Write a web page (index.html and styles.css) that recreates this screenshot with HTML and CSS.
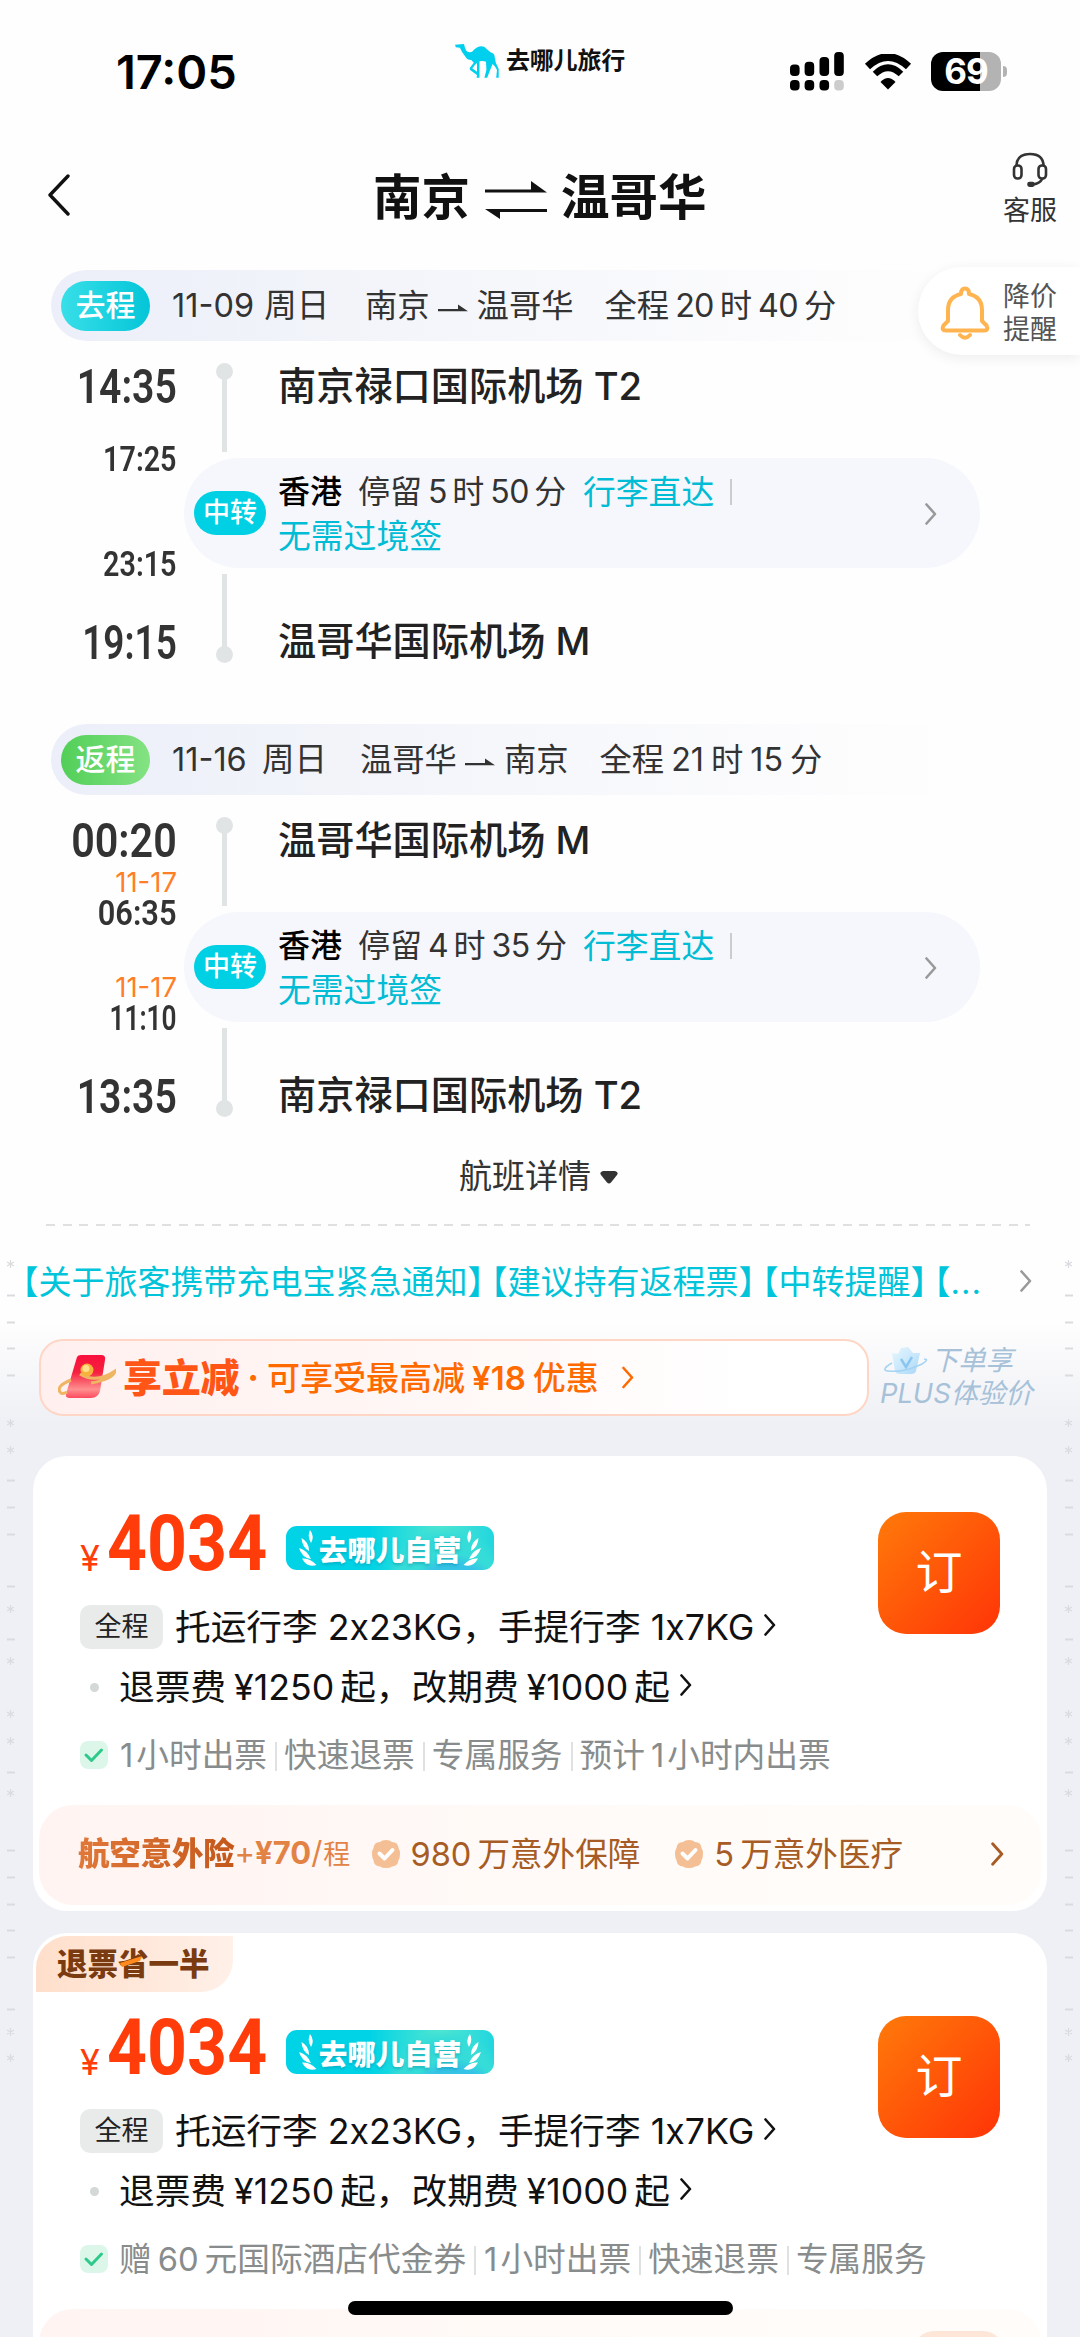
FILE: index.html
```html
<!DOCTYPE html>
<html lang="zh-CN">
<head>
<meta charset="utf-8">
<title>南京 - 温哥华</title>
<link rel="stylesheet" href="styles.css">
</head>
<body>
<svg class="defs" width="0" height="0">
  <defs>
    <linearGradient id="redg" x1="0" y1="0" x2="0" y2="1"><stop offset="0" stop-color="#f9103c"/><stop offset=".4" stop-color="#f5203f"/><stop offset=".8" stop-color="#ff8f8f"/><stop offset="1" stop-color="#ff4a5e"/></linearGradient>
    <linearGradient id="crown" x1="0" y1="0" x2="1" y2="1"><stop offset="0" stop-color="#e6f6fe"/><stop offset=".6" stop-color="#c5e6fb"/><stop offset="1" stop-color="#a5d5f5"/></linearGradient>
  </defs>
  <symbol id="chev" viewBox="0 0 12 22"><path d="M1.5 1.5 L10 11 L1.5 20.5" fill="none" stroke="currentColor" stroke-width="2.6" stroke-linecap="round" stroke-linejoin="round"/></symbol>
  <symbol id="arrow" viewBox="0 0 30 12"><path d="M0 9.2H30L20 2.6V7H0Z" fill="currentColor"/></symbol>
  <symbol id="leaf" viewBox="0 0 18 37"><path d="M11 0Q16 6 12 13Q8 7 11 0ZM2.500 8Q10 12 10 21Q3 17 2.500 8ZM0 18Q8 20 12 29Q3 28 0 18ZM3 28.500Q11 27.500 17.500 35Q8 38 3 28.500Z" fill="#fff"/></symbol>
  <symbol id="ast" viewBox="0 0 8 8"><path d="M4 0V8M.5 2L7.500 6M.5 6L7.500 2" stroke="#d9dbdf" stroke-width="1.200"/></symbol>
  <symbol id="tick" viewBox="0 0 28 28"><rect width="28" height="28" rx="8" fill="#dcf7ea"/><path d="M6 14L11.500 19.500L21.500 9" fill="none" stroke="#2fc98a" stroke-width="3" stroke-linecap="round" stroke-linejoin="round"/></symbol>
  <symbol id="seal" viewBox="0 0 28 28"><path d="M14 0Q18 0 20 2Q26 2 26.500 8Q28 10 28 14Q28 18 26.500 20Q26 26 20 26.500Q18 28 14 28Q10 28 8 26.500Q2 26 1.500 20Q0 18 0 14Q0 10 1.500 8Q2 2 8 2Q10 0 14 0Z" fill="#f4bf94"/><path d="M7.500 13.500L12.500 18.500L20.500 10" fill="none" stroke="#fff" stroke-width="4" stroke-linecap="round" stroke-linejoin="round"/></symbol>
</svg>

<svg class="marks" width="1080" height="2337" viewBox="0 0 1080 2337">
  <defs>
    <g id="strip">
      <path d="M7 1295.500h8M7 1322.500h8M7 1348.500h8M7 1375.500h8M7 1480.500h8M7 1507.500h8M7 1534.500h8M7 1586.500h8M7 1639.500h8M7 1772.500h8M7 1850.500h8M7 1877.500h8M7 1904.500h8M7 1930.500h8M7 1957.500h8M7 2009.500h8" stroke="#d9dbdf" stroke-width="2"/>
      <use href="#ast" x="6.500" y="1260" width="8" height="8"/><use href="#ast" x="6.500" y="1419" width="8" height="8"/><use href="#ast" x="6.500" y="1446" width="8" height="8"/><use href="#ast" x="6.500" y="1605" width="8" height="8"/><use href="#ast" x="6.500" y="1657" width="8" height="8"/><use href="#ast" x="6.500" y="1710" width="8" height="8"/><use href="#ast" x="6.500" y="1737" width="8" height="8"/><use href="#ast" x="6.500" y="1789" width="8" height="8"/><use href="#ast" x="6.500" y="2028" width="8" height="8"/><use href="#ast" x="6.500" y="2054" width="8" height="8"/>
    </g>
  </defs>
  <use href="#strip"/><use href="#strip" x="1058"/>
</svg>

<div class="status">
  <div class="clock">17:05</div>
  <div class="brand">
    <svg width="44" height="34" viewBox="0 0 44 34"><path fill="#00cfee" fill-rule="evenodd" d="M0 .7L9 0L9.800 3.300Q11 8 13.900 8Q15.500 8.500 17.100 7.700Q22 2.300 26.500 2.300Q29.500 2.300 31.400 4.700L35.500 8.300Q39.600 9.500 39.600 12.500L40.800 18.700L43.700 25V33.700H41.200L42 26Q40 22 37.600 20L35.100 26L32.200 33.700H29.400L31.400 26L31 17.700Q28 16.500 24.500 17.300V33.700H21.600L22 31L15.100 26L14.700 24L18.800 18.700L16.300 16Q12 16 10.600 13L6.900 7.700L4.900 3.700L.8 3.300ZM20.600 20L17.300 24.300L22 27.700V19.300Z"/></svg>
    <span>去哪儿旅行</span>
  </div>
  <div class="sys">
    <svg width="54" height="40" viewBox="0 0 54 40"><g><rect x="0" y="12.500" width="9.600" height="11.500" rx="4"/><rect x="14.600" y="9.700" width="9.600" height="14.300" rx="4"/><rect x="29.500" y="5" width="9.600" height="19" rx="4"/><rect x="44.200" y="0" width="9.600" height="24" rx="4"/><rect x="0" y="28" width="9.600" height="10.500" rx="4"/><rect x="14.600" y="28" width="9.600" height="10.500" rx="4"/><rect x="29.500" y="28" width="9.600" height="10.500" rx="4"/><rect x="44.200" y="28" width="9.600" height="10.500" rx="4" fill="#ccc"/></g></svg>
    <svg width="48" height="36" viewBox="0 0 48 36"><path d="M3.500 12.500Q24 -6.500 44.500 12.500" fill="none" stroke="#000" stroke-width="7.500"/><path d="M11 20Q24 7.500 37 20" fill="none" stroke="#000" stroke-width="6.500"/><path d="M16.500 28Q24 20 31.500 28L24 35.500Z"/></svg>
    <div class="battery"><span>69</span></div>
  </div>
</div>

<header class="top">
  <svg class="back" width="24" height="42" viewBox="0 0 24 42"><path d="M21 2L3 21L21 40" fill="none" stroke="#111" stroke-width="3.400" stroke-linecap="round" stroke-linejoin="round"/></svg>
  <h1>南京<svg width="62" height="38" viewBox="0 0 62 38"><path d="M0 8.500H46V0L62 11.500H0ZM62 28H0L15 38V31H62Z" fill="#111"/></svg>温哥华</h1>
  <div class="service">
    <svg width="36" height="36" viewBox="0 0 36 36" fill="none" stroke="#333" stroke-width="2.600"><path d="M4.500 13.500Q5 2 18 2Q31 2 31.500 13.500"/><rect x="2" y="13.500" width="7.500" height="13" rx="3.500"/><rect x="26.500" y="13.500" width="7.500" height="13" rx="3.500"/><path d="M30.500 26.500Q28 31.500 21 32.500"/><rect x="16.500" y="31" width="5" height="2.600" rx="1" fill="#333"/></svg>
    <span>客服</span>
  </div>
</header>

<aside class="alert">
  <svg width="50" height="54" viewBox="0 0 50 54" fill="none" stroke="#ffb450" stroke-width="4" stroke-linejoin="round" stroke-linecap="round"><path d="M21 8Q21 2.500 25 2.500Q29 2.500 29 8Q42 11 42 24V35L46.500 39.500Q49 44.500 44 44.500H6Q1 44.500 3.500 39.500L8 35V24Q8 11 21 8Z"/><path d="M20 49Q25 54.500 30 49"/></svg>
  <p>降价<br>提醒</p>
</aside>

<main>
<section class="trip">
  <div class="bar"><b class="go">去程</b><span class="date">11-09 周日</span><span class="cities">南京<svg width="30" height="12"><use href="#arrow"/></svg>温哥华</span><span class="total">全程<i>20</i>时<i>40</i>分</span></div>
  <div class="route">
    <div class="times"><span class="t1 mid">14:35</span><span class="d"></span><span class="t2 mid">17:25</span><span class="d d2"></span><span class="t2 mid">23:15</span><span class="t1 end slim">19:15</span></div>
    <div class="rail down"></div>
    <div class="port">南京禄口国际机场 T2</div>
    <div class="transit"><b>中转</b><div class="info"><p><strong>香港</strong><span>停留<i>5</i>时<i>50</i>分</span><em>行李直达</em><u></u></p><p><em>无需过境签</em></p></div><svg width="12" height="22"><use href="#chev"/></svg></div>
    <div class="rail up"></div>
    <div class="port last">温哥华国际机场 M</div>
  </div>
</section>
<section class="trip second">
  <div class="bar"><b class="ret">返程</b><span class="date">11-16 周日</span><span class="cities">温哥华<svg width="30" height="12"><use href="#arrow"/></svg>南京</span><span class="total">全程<i>21</i>时<i>15</i>分</span></div>
  <div class="route">
    <div class="times"><span class="t1">00:20</span><span class="d">11-17</span><span class="t2">06:35</span><span class="d d2">11-17</span><span class="t2 slim">11:10</span><span class="t1 end mid">13:35</span></div>
    <div class="rail down"></div>
    <div class="port">温哥华国际机场 M</div>
    <div class="transit"><b>中转</b><div class="info"><p><strong>香港</strong><span>停留<i>4</i>时<i>35</i>分</span><em>行李直达</em><u></u></p><p><em>无需过境签</em></p></div><svg width="12" height="22"><use href="#chev"/></svg></div>
    <div class="rail up"></div>
    <div class="port last">南京禄口国际机场 T2</div>
  </div>
</section>

<div class="detail">航班详情<svg width="18" height="13" viewBox="0 0 18 13"><path d="M3 0H15Q19 1 17 4L11 11.500Q9 13.500 7 11.500L1 4Q-1 1 3 0Z" fill="#333"/></svg></div>
<div class="dash"></div>
<div class="notice"><span>【关于旅客携带充电宝紧急通知<i>】</i>【建议持有返程票<i>】</i>【中转提醒<i>】</i>【<s>...</s></span><svg width="12" height="22"><use href="#chev"/></svg></div>

<div class="promos">
  <div class="promo">
    <svg width="58" height="46" viewBox="0 0 58 46"><path d="M19 2Q20 0 23 0H43Q48 0 47 5L42 36Q40 43 33 43H12Q7 43 8 39Z" fill="url(#redg)"/><path d="M13 25Q-2 31 2 37Q4 40 9 37M22 19Q38 29 57 16Q55 24 33 28" fill="none" stroke="#efb563" stroke-width="3"/><circle cx="29" cy="15" r="6.500" fill="#f7b23e"/><circle cx="28" cy="13.500" r="3.500" fill="#ffe08d"/></svg>
    <strong>享立减</strong><span class="pt">·</span><span class="ptext">可享受最高减<i>¥18</i>优惠</span><svg class="pc" width="12" height="23"><use href="#chev"/></svg>
  </div>
  <div class="plus">
    <p><svg width="44" height="28" viewBox="0 0 44 28"><path d="M8 6L14 7L17 1L24 0L29 6L36 6L32 24Q31 27 27 27H15Q12 27 11 24Z" fill="url(#crown)"/><path d="M17 12L22 20L28 10" fill="none" stroke="#8cc6f0" stroke-width="2.500"/><path d="M8 16Q-4 23 4 24Q20 26 38 17Q46 12 40 12" fill="none" stroke="#a5d3f3" stroke-width="1.500"/></svg>下单享</p>
    <p class="l2">PLUS体验价</p>
  </div>
</div>

<article class="card">
  <div class="offer">
    <div class="price"><small>¥</small><strong><span>4034</span></strong><div class="self"><svg width="18" height="37"><use href="#leaf"/></svg><span>去哪儿自营</span><svg class="flip" width="18" height="37"><use href="#leaf"/></svg></div></div>
    <div class="book">订</div>
  </div>
  <div class="bag"><b>全程</b><span>托运行李 2x23KG，手提行李 1x7KG</span><svg width="12" height="22"><use href="#chev"/></svg></div>
  <div class="fee"><span>退票费<i>¥1250</i>起，改期费<i>¥1000</i>起</span><svg width="12" height="22"><use href="#chev"/></svg></div>
  <div class="perks"><svg width="28" height="28"><use href="#tick"/></svg><span><i class="one">1</i>小时出票</span><span>快速退票</span><span>专属服务</span><span>预计<i class="one mid">1</i>小时内出票</span></div>
  <div class="insure"><strong>航空意外险</strong><span class="add">+<b>¥70</b>/<small>程</small></span><svg width="28" height="28"><use href="#seal"/></svg><span class="cov"><i>980</i>万意外保障</span><svg class="s2" width="28" height="28"><use href="#seal"/></svg><span class="cov"><i>5</i>万意外医疗</span><svg class="go2" width="13" height="24"><use href="#chev"/></svg></div>
</article>

<article class="card second">
  <div class="half">退票省一半<svg width="24" height="12" viewBox="0 0 24 12"><path d="M0 8L22 1L20 6L2 12Z" fill="#ff8a1e"/></svg></div>
  <div class="offer">
    <div class="price"><small>¥</small><strong><span>4034</span></strong><div class="self"><svg width="18" height="37"><use href="#leaf"/></svg><span>去哪儿自营</span><svg class="flip" width="18" height="37"><use href="#leaf"/></svg></div></div>
    <div class="book">订</div>
  </div>
  <div class="bag"><b>全程</b><span>托运行李 2x23KG，手提行李 1x7KG</span><svg width="12" height="22"><use href="#chev"/></svg></div>
  <div class="fee"><span>退票费<i>¥1250</i>起，改期费<i>¥1000</i>起</span><svg width="12" height="22"><use href="#chev"/></svg></div>
  <div class="perks"><svg width="28" height="28"><use href="#tick"/></svg><span>赠<i class="sixty">60</i>元国际酒店代金券</span><span><i class="one">1</i>小时出票</span><span>快速退票</span><span>专属服务</span></div>
  <div class="insure"><div class="peek"></div></div>
</article>
</main>
<div class="home"></div>
</body>
</html>
```
FILE: styles.css
```css
* { box-sizing: border-box; margin: 0; padding: 0; }
html { background: #fdfdfd; }
body {
  position: relative; width: 1080px; height: 2337px; overflow: hidden;
  font-family: Inter, "Noto Sans CJK SC", sans-serif; color: #333;
  background: linear-gradient(#fefefe 1320px, #eff0f5 1425px);
}
i, em, u { font-style: normal; text-decoration: none; }
svg { display: block; flex: none; }
.defs, .marks { position: absolute; left: 0; top: 0; }

/* status bar */
.status { height: 120px; display: flex; position: relative; }
.clock { width: 455px; padding-left: 116px; line-height: 144px; font-size: 47px; font-weight: 600; color: #000; }
.brand { display: flex; align-items: flex-start; padding-top: 44px; width: 335px; }
.brand span { margin-left: 7px; line-height: 34px; font-size: 24px; font-weight: 700; color: #111; letter-spacing: -.2px; }
.sys { display: flex; align-items: flex-start; padding-top: 52px; }
.sys svg:nth-child(2) { margin: 2px 0 0 20px; }
.battery { position: relative; margin-left: 19px; width: 70px; height: 39px; border-radius: 12px; background: linear-gradient(90deg, #000 49px, #b3b3b3 49px); color: #fff; text-align: center; font-size: 35px; font-weight: 700; line-height: 39px; letter-spacing: -1px; }
.battery::after { content: ""; position: absolute; left: 72px; top: 14px; width: 4px; height: 11px; border-radius: 0 5px 5px 0; background: #b3b3b3; }

/* title */
.top { height: 150px; display: flex; align-items: center; position: relative; }
.back { margin: 0 0 0 47px; width: 24px; }
.top h1 { margin-left: 302px; width: 630px; display: flex; align-items: center; font-size: 48.500px; line-height: 60px; color: #111; font-weight: 700; padding-top: 6px; }
.top h1 svg { margin: 4px 14px 0 15px; }
.service { width: 54px; display: flex; flex-direction: column; align-items: center; padding-bottom: 10px; }
.service span { font-size: 27px; line-height: 34px; margin-top: 6px; }

.alert { position: absolute; right: 0; top: 267px; width: 162px; height: 88px; border-radius: 44px 0 0 44px; background: #fff; box-shadow: 0 3px 14px rgba(0,0,0,.07); display: flex; align-items: center; padding: 4px 0 0 22px; z-index: 2; }
.alert p { margin-left: 13px; font-size: 27px; line-height: 33px; color: #555; }

/* itinerary */
.trip { height: 454px; }
.trip.second { height: 420px; }
.bar { margin-left: 51px; width: 910px; height: 71px; padding-left: 10px; border-radius: 36px; display: flex; align-items: center; font-size: 32.300px; line-height: 40px; background: linear-gradient(90deg, #eceff9, #f6f7fb 50%, rgba(254,254,254,0)); white-space: pre; }
.bar b { width: 89px; height: 50px; border-radius: 25px; text-align: center; color: #fff; font-size: 30px; font-weight: 500; line-height: 49px; }
.go { background: linear-gradient(90deg, #38dfe8, #04c5d8); }
.ret { background: linear-gradient(90deg, #52cf58, #84e283); }
.date { margin-left: 22px; width: 193px; font-size: 32.500px; word-spacing: 1px; }
.second .date { width: 188px; word-spacing: 6px; }
.cities { display: flex; align-items: center; }
.cities svg { margin: 5px 9px 0 8px; color: #333; }
.total { margin-left: 31px; }
.total i { margin: 0 6px; letter-spacing: -.7px; }
.second .total i { letter-spacing: 0; margin: 0 7px; }

.route { display: grid; grid-template-columns: 184px 94px 1fr; grid-template-rows: 117px 110px 156px; }
.times { grid-row: 1 / 4; grid-column: 1; display: flex; flex-direction: column; align-items: flex-end; padding: 18px 7px 0 0; font-family: Roboto, sans-serif; font-weight: 600; color: #333; }
.times span { transform-origin: right center; }
.t1 { font-size: 48px; line-height: 56px; height: 54px; transform: scaleX(.86); }
.t2 { font-size: 35px; line-height: 33px; height: 31px; transform: scaleX(.88); font-weight: 600; }
.t1.mid { transform: scaleX(.815); }
.t1.slim { transform: scaleX(.77); }
.t2.mid { transform: scaleX(.82); }
.t2.slim { transform: scaleX(.75); }
.d { font-family: Inter, sans-serif; font-size: 27.500px; line-height: 30px; height: 30px; color: #ff7f28; font-weight: 400; }
.d2 { margin-top: 44px; }
.end { margin-top: 36px; }
.rail { grid-column: 2; justify-self: start; margin-left: 38px; width: 5px; background: #e1e4e5; position: relative; }
.rail.down { grid-row: 1; margin-top: 30px; height: 81px; }
.rail.up { grid-row: 3; margin-top: 6px; height: 82px; }
.rail::after { content: ""; position: absolute; left: -6px; width: 17px; height: 17px; border-radius: 50%; background: #e1e4e5; }
.rail.down::after { top: -8px; }
.rail.up::after { bottom: -7px; }
.port { grid-column: 3; grid-row: 1; font-size: 38.200px; font-weight: 500; line-height: 90px; color: #222; }
.port.last { grid-row: 3; padding-top: 28px; }
.transit { grid-column: 2 / 4; grid-row: 2; width: 796px; height: 110px; border-radius: 55px; background: #f6f7fc; display: flex; align-items: center; padding: 0 43px 0 10px; }
.transit b { width: 72px; height: 44px; border-radius: 22px; background: #00d0e3; color: #fff; text-align: center; font-size: 27px; line-height: 43px; font-weight: 500; }
.info { margin: 2px 0 0 12px; flex: 1; font-size: 32px; line-height: 44px; }
.info p { display: flex; align-items: center; height: 44px; }
.info strong { font-weight: 500; color: #000; width: 80px; }
.info em { color: #00bcd4; font-size: 32.800px; }
.info span { width: 225px; white-space: nowrap; }
.info i { margin: 0 5px 0 6px; letter-spacing: -.3px; }
.info u { margin-left: 16px; width: 2px; height: 26px; background: #ccc; }
.transit > svg { color: #999; margin-top: 2px; }

.detail { height: 62px; display: flex; align-items: center; padding: 0 0 2px 459px; font-size: 33px; }
.detail svg { margin: 6px 0 0 9px; }
.dash { margin: 18px 50px 0 46px; height: 2px; background: repeating-linear-gradient(90deg, #dfe1e1 0 9px, transparent 9px 16.6px); }
.notice { height: 113px; display: flex; align-items: center; justify-content: space-between; padding: 0 48px 3px 22px; }
.notice span { font: 33px/40px "Noto Sans CJK SC", sans-serif; font-feature-settings: "halt"; color: #00c4d9; white-space: nowrap; }
.notice i { margin-right: 7px; }
.notice s { text-decoration: none; font-family: Inter, sans-serif; letter-spacing: 1px; }
.notice svg { color: #999; }

/* promotions */
.promos { display: flex; height: 77px; margin-left: 39px; }
.promo { width: 830px; height: 77px; border: 2px solid #ffd6c5; border-radius: 24px; background: linear-gradient(90deg, #fff0ef, #fff8f6 50%, #fff 85%); display: flex; align-items: center; padding-left: 17px; color: #ff6a00; }
.promo strong { margin-left: 7px; font-size: 39px; font-weight: 900; line-height: 60px; color: #ff5618; letter-spacing: -.3px; }
.pt { width: 28px; text-align: center; font-size: 32px; font-weight: 800; }
.ptext { font-size: 33px; line-height: 40px; font-weight: 500; white-space: nowrap; }
.ptext i { margin: 0 7px; font-weight: 600; }
.pc { margin-left: 23px; }
.plus { margin-left: 11px; padding-top: 5px; color: #a6c1d8; font-size: 27.300px; font-style: italic; white-space: nowrap; }
.plus p { display: flex; align-items: center; height: 33px; line-height: 33px; padding-left: 4px; }
.plus p svg { margin-right: 3px; }
.plus .l2 { padding-left: 0; }

/* fare cards */
.card { margin: 40px 33px 0; height: 455px; border-radius: 34px; background: #fff; position: relative; }
.card.second { margin-top: 22px; height: 460px; }
.offer { display: flex; height: 149px; padding: 56px 47px 0 47px; justify-content: space-between; }
.price { display: flex; height: 62px; color: #ff3c0a; }
.price small { font-size: 36px; line-height: 41px; padding-top: 26px; width: 27px; }
.price strong { width: 179px; font-family: Roboto, sans-serif; font-size: 78px; line-height: 64px; font-weight: 700; }
.price strong span { display: inline-block; transform: scaleX(.895); transform-origin: left; }
.self { margin-top: 14px; width: 208px; height: 44px; border-radius: 11px; display: flex; align-items: center; justify-content: center; background: radial-gradient(circle at 168px 78px, #35c4e6 0 40px, transparent 50px), radial-gradient(circle at 160px 60px, #35dcd8 0 50px, transparent 61px), linear-gradient(90deg, #00d3e6 40%, #52e6d0 75%, #20d6df); color: #fff; }
.self span { font-size: 28.5px; font-weight: 800; text-shadow: 0 2px 3px rgba(0,120,150,.35); margin: 0 2px; }
.flip { transform: scaleX(-1); }
.book { width: 122px; height: 122px; border-radius: 28px; background: linear-gradient(135deg, #ff7a0a, #ff3407); color: #fff; font-size: 47px; line-height: 120px; text-align: center; }
.bag { display: flex; align-items: center; height: 44px; padding-left: 47px; font-size: 35.700px; line-height: 44px; color: #111; white-space: pre; }
.bag b { width: 83px; height: 44px; border-radius: 10px; background: #e9ebeb; text-align: center; font-size: 27px; font-weight: 400; line-height: 43px; margin-right: 12px; color: #222; }
.bag svg, .fee svg { margin: 0 0 5px 10px; }
.fee { display: flex; align-items: center; height: 44px; margin-top: 16px; padding-left: 57px; font-size: 35.700px; line-height: 44px; color: #111; white-space: nowrap; }
.fee::before { content: ""; width: 9px; height: 9px; border-radius: 50%; background: #d5d8d8; margin-right: 20px; }
.fee i { margin: 0 6px 0 8px; }
.perks { display: flex; align-items: center; height: 40px; margin-top: 26px; padding-left: 47px; font-size: 32.700px; line-height: 40px; color: #888c8c; white-space: nowrap; }
.perks > svg { margin-right: 11px; }
.perks span + span::before { content: ""; display: inline-block; width: 2px; height: 29px; background: #e0e2e2; margin: 0 7px 0 8px; vertical-align: -4px; }
.one { margin: 0 3px 0 1px; }
.one.mid { margin-left: 6px; }
.sixty { margin: 0 6px; }
.insure { margin: 30px 6px 0; height: 100px; border-radius: 34px; background: linear-gradient(90deg, #fff4f1, #fffbf9 60%, #fffcfa); display: flex; align-items: center; padding: 0 37px 2px 39px; font-size: 32.600px; line-height: 40px; color: #a65c24; white-space: nowrap; }
.insure strong { font-size: 31.500px; font-weight: 800; background: linear-gradient(90deg, #e0783a, #c4581a); -webkit-background-clip: text; color: transparent; letter-spacing: -.2px; }
.add { color: #e38245; width: 137px; font-size: 31px; }
.add b { font-weight: 700; }
.add small { font-size: 27px; margin-left: 1px; }
.cov { margin-left: 11px; }
.cov i { margin-right: 6px; }
.s2 { margin-left: 35px; }
.go2 { margin-left: auto; }
.half { position: absolute; left: 3px; top: 3px; width: 197px; height: 56px; border-radius: 32px 0 32px 0; background: linear-gradient(90deg, #ffdfcb, #fff0e8); padding-left: 21px; font-size: 30.500px; font-weight: 800; line-height: 56px; color: #7a3b10; }
.half svg { position: absolute; left: 84px; top: 19px; }
.second .offer { padding-top: 83px; height: 176px; }
.second .insure { padding: 0; position: relative; }
.peek { position: absolute; left: 875px; top: 22px; width: 89px; height: 40px; border-radius: 20px; background: #fde6d8; }
.home { position: absolute; left: 348px; top: 2301px; width: 385px; height: 14px; border-radius: 7px; background: #000; }
```
